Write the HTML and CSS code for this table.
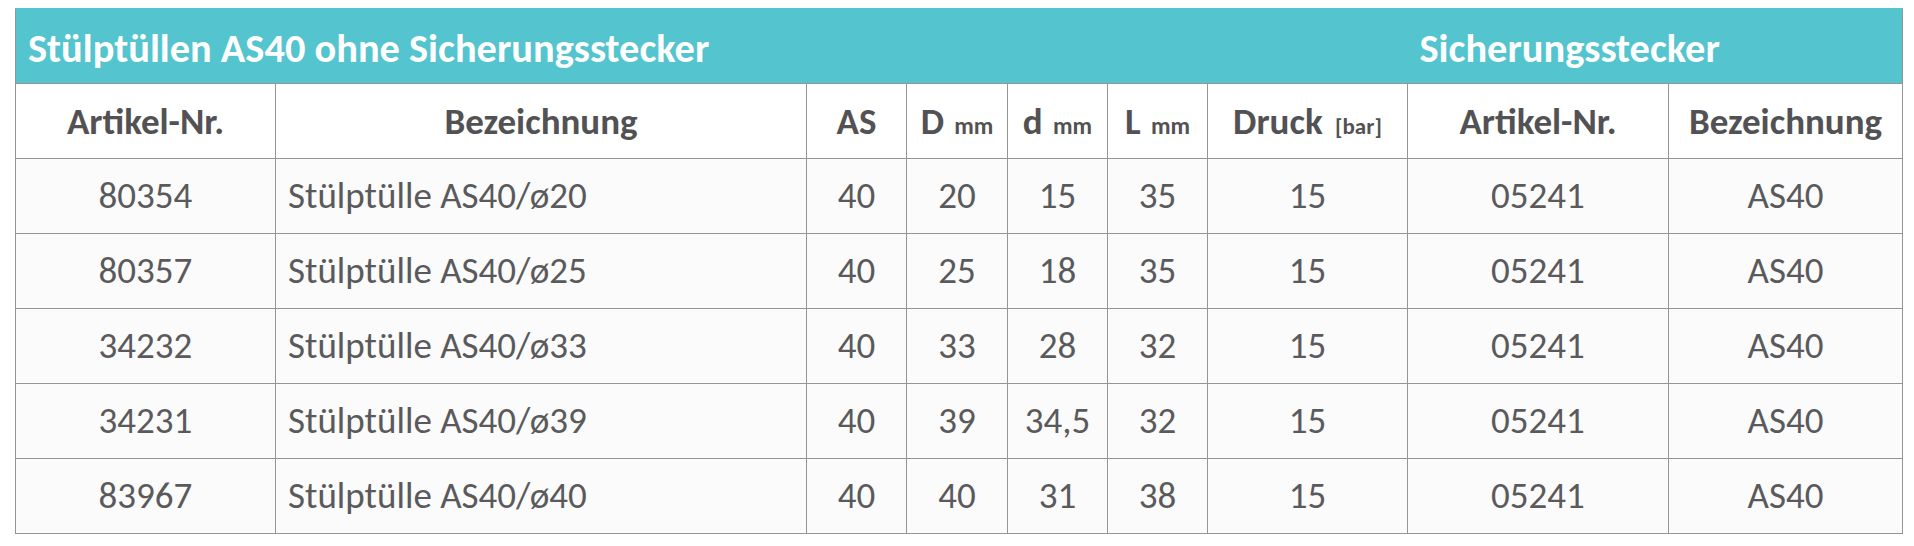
FILE: index.html
```html
<!DOCTYPE html>
<html lang="de">
<head>
<meta charset="utf-8">
<title>Stülptüllen AS40</title>
<link rel="stylesheet" href="styles.css">
</head>
<body>
<div class="page">
<table class="spec">
  <colgroup>
    <col class="c-art"><col class="c-bez"><col class="c-num"><col class="c-num2"><col class="c-num"><col class="c-num"><col class="c-druck"><col class="c-art2"><col class="c-bez2">
  </colgroup>
  <thead>
    <tr class="band">
      <th colspan="7" class="band-cell">Stülptüllen AS40 ohne Sicherungsstecker</th>
      <th colspan="2" class="band-cell">Sicherungsstecker</th>
    </tr>
    <tr class="head">
      <th>Artikel-Nr.</th>
      <th>Bezeichnung</th>
      <th>AS</th>
      <th>D <span class="unit">mm</span></th>
      <th>d <span class="unit">mm</span></th>
      <th>L <span class="unit">mm</span></th>
      <th>Druck <span class="unit unit-bar">[bar]</span></th>
      <th>Artikel-Nr.</th>
      <th>Bezeichnung</th>
    </tr>
  </thead>
  <tbody>
    <tr><td>80354</td><td class="name">Stülptülle AS40/ø20</td><td>40</td><td>20</td><td>15</td><td>35</td><td>15</td><td>05241</td><td>AS40</td></tr>
    <tr><td>80357</td><td class="name">Stülptülle AS40/ø25</td><td>40</td><td>25</td><td>18</td><td>35</td><td>15</td><td>05241</td><td>AS40</td></tr>
    <tr><td>34232</td><td class="name">Stülptülle AS40/ø33</td><td>40</td><td>33</td><td>28</td><td>32</td><td>15</td><td>05241</td><td>AS40</td></tr>
    <tr><td>34231</td><td class="name">Stülptülle AS40/ø39</td><td>40</td><td>39</td><td>34,5</td><td>32</td><td>15</td><td>05241</td><td>AS40</td></tr>
    <tr><td>83967</td><td class="name">Stülptülle AS40/ø40</td><td>40</td><td>40</td><td>31</td><td>38</td><td>15</td><td>05241</td><td>AS40</td></tr>
  </tbody>
</table>
</div>
</body>
</html>
```

FILE: styles.css
```css
html, body {
  margin: 0;
  padding: 0;
  background: #ffffff;
}

.page {
  padding: 8px 0 0 15px;
}

.spec {
  border-collapse: collapse;
  table-layout: fixed;
  width: 1888px;
  font-family: "Carlito", "Calibri", "Lato", sans-serif;
  border: 1px solid #959595;
}

.c-art { width: 260px; }
.c-bez { width: 531px; }
.c-num { width: 100px; }
.c-num2 { width: 101px; }
.c-druck { width: 200px; }
.c-art2 { width: 261px; }
.c-bez2 { width: 234px; }

.band-cell {
  background: #54c4cf;
  color: #ffffff;
  font-weight: 700;
  font-size: 40.4px;
  text-align: left;
  height: 75px;
  padding: 4px 12px 0 12px;
  box-sizing: border-box;
  border-top: 1px solid #54c4cf;
  border-bottom: 1px solid #959595;
  white-space: nowrap;
}

.head th {
  background: #ffffff;
  color: #525254;
  font-weight: 700;
  font-size: 37px;
  text-align: center;
  height: 75px;
  padding: 0 4px;
  box-sizing: border-box;
  border: 1px solid #959595;
  white-space: nowrap;
}

.unit {
  font-size: 24px;
  margin-left: 2px;
}

.unit-bar {
  font-size: 23px;
  margin-left: 4px;
}

tbody td {
  background: #fbfbfb;
  color: #5a5a5c;
  font-size: 37px;
  text-align: center;
  height: 75px;
  padding: 0 4px 2px 4px;
  box-sizing: border-box;
  border: 1px solid #959595;
  white-space: nowrap;
}

tbody td.name {
  text-align: left;
  padding-left: 12px;
}
```
